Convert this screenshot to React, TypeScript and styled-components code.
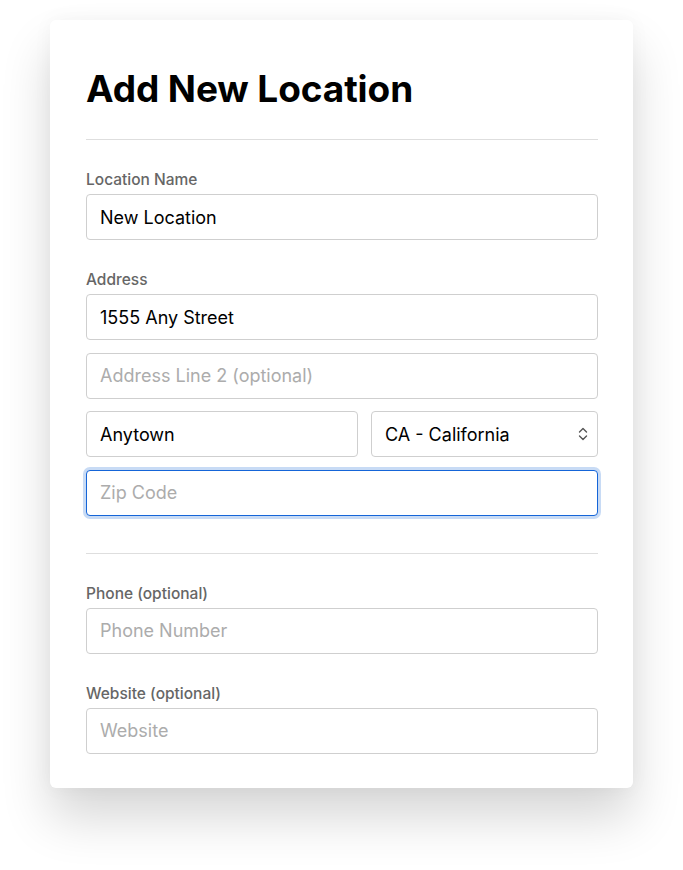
import React from "react";
import styled, { createGlobalStyle } from "styled-components";

const Global = createGlobalStyle`
  html, body { margin: 0; padding: 0; background: #ffffff; }
  body { font-family: Inter, "Noto Sans", "Liberation Sans", sans-serif; -webkit-font-smoothing: antialiased; }
  * { box-sizing: border-box; }
`;

const Page = styled.div`
  padding: 20px 50px 80px;
`;

const Card = styled.form`
  background: #fff;
  border-radius: 6px;
  box-shadow: 0 30px 50px rgba(0, 0, 0, 0.16), 0 0 20px rgba(0, 0, 0, 0.04);
  padding: 47px 35px 34px 36px;
  display: flex;
  flex-direction: column;
`;

const Title = styled.h1`
  margin: 0 0 28px;
  font-size: 37px;
  line-height: 44px;
  font-weight: 700;
  color: #000;
  letter-spacing: -0.1px;
`;

const Divider = styled.hr<{ $top?: number }>`
  border: 0;
  border-top: 1px solid #dedede;
  margin: ${(p) => p.$top ?? 0}px 0 0;
  width: 100%;
`;

const Section = styled.div`
  display: flex;
  flex-direction: column;
  gap: 31px;
  padding-top: 31px;
`;

const Field = styled.div`
  display: flex;
  flex-direction: column;
`;

const Label = styled.label`
  font-size: 15.5px;
  line-height: 18px;
  font-weight: 500;
  color: #666;
  margin-bottom: 5px;
`;

const Stack = styled.div`
  display: flex;
  flex-direction: column;
  gap: 12.67px;
`;

const Row = styled.div`
  display: grid;
  grid-template-columns: 1fr 227px;
  gap: 13px;
`;

const Input = styled.input<{ $focused?: boolean }>`
  display: block;
  width: 100%;
  height: 46px;
  padding: 0 13px;
  font-family: inherit;
  font-size: 18px;
  color: #000;
  background: #fff;
  border: 1px solid ${(p) => (p.$focused ? "#1565d8" : "#cfcfcf")};
  border-radius: 4px;
  outline: none;
  box-shadow: ${(p) => (p.$focused ? "0 0 0 3px #c8dbf5" : "none")};
  &::placeholder { color: #acacac; }
`;

const SelectWrap = styled.div`
  position: relative;
`;

const Select = styled.select`
  display: block;
  width: 100%;
  height: 46px;
  padding: 0 36px 0 13px;
  font-family: inherit;
  font-size: 18px;
  color: #000;
  background: #fff;
  border: 1px solid #cfcfcf;
  border-radius: 4px;
  appearance: none;
  -webkit-appearance: none;
  outline: none;
`;

const Chevrons = styled.svg`
  position: absolute;
  right: 9px;
  top: 50%;
  transform: translateY(-50%);
  pointer-events: none;
`;

export default function App() {
  return (
    <Page>
      <Global />
      <Card onSubmit={(e) => e.preventDefault()}>
        <Title>Add New Location</Title>
        <Divider />
        <Section>
          <Field>
            <Label>Location Name</Label>
            <Input defaultValue="New Location" />
          </Field>
          <Field>
            <Label>Address</Label>
            <Stack>
              <Input defaultValue="1555 Any Street" />
              <Input placeholder="Address Line 2 (optional)" />
              <Row>
                <Input defaultValue="Anytown" />
                <SelectWrap>
                  <Select defaultValue="CA">
                    <option value="CA">CA - California</option>
                  </Select>
                  <Chevrons width="12" height="16" viewBox="0 0 12 16" fill="none">
                    <path d="M2.5 6 L6 2.5 L9.5 6" stroke="#555" strokeWidth="1.4" strokeLinecap="round" strokeLinejoin="round" />
                    <path d="M2.5 10 L6 13.5 L9.5 10" stroke="#555" strokeWidth="1.4" strokeLinecap="round" strokeLinejoin="round" />
                  </Chevrons>
                </SelectWrap>
              </Row>
              <Input $focused placeholder="Zip Code" />
            </Stack>
          </Field>
        </Section>
        <Divider $top={37} />
        <Section>
          <Field>
            <Label>Phone (optional)</Label>
            <Input placeholder="Phone Number" />
          </Field>
          <Field>
            <Label>Website (optional)</Label>
            <Input placeholder="Website" />
          </Field>
        </Section>
      </Card>
    </Page>
  );
}
